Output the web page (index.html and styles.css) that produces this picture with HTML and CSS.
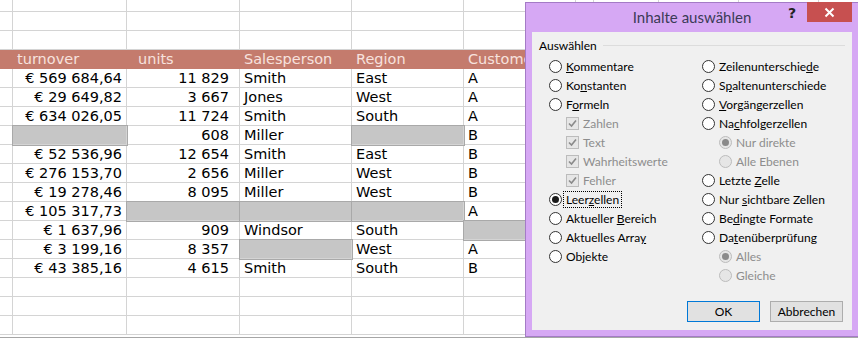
FILE: index.html
```html
<!DOCTYPE html>
<html lang="de">
<head>
    <meta charset="UTF-8">
    <title>Inhalte auswählen</title>
    <link rel="stylesheet" href="styles.css">
</head>
<body>
    <div class="sheet">
        <div class="row top"><div></div><div></div><div></div><div></div><div></div><div></div><div></div><div></div><div></div><div></div></div>
        <div class="row"><div></div><div></div><div></div><div></div><div></div><div></div><div></div><div></div><div></div><div></div></div>
        <div class="row"><div></div><div></div><div></div><div></div><div></div><div></div><div></div><div></div><div></div><div></div></div>
        <div class="row head"><div></div><div>turnover</div><div class="indent">units</div><div>Salesperson</div><div>Region</div><div>Customer</div><div></div><div></div><div></div><div></div></div>

        <div class="row"><div></div><div class="num">€ 569 684,64</div><div class="num units">11 829</div><div>Smith</div><div>East</div><div>A</div><div></div><div></div><div></div><div></div></div>
        <div class="row"><div></div><div class="num">€ 29 649,82</div><div class="num units">3 667</div><div>Jones</div><div>West</div><div>A</div><div></div><div></div><div></div><div></div></div>
        <div class="row"><div></div><div class="num">€ 634 026,05</div><div class="num units">11 724</div><div>Smith</div><div>South</div><div>A</div><div></div><div></div><div></div><div></div></div>
        <div class="row"><div></div><div class="blank"></div><div class="num units">608</div><div>Miller</div><div class="blank"></div><div>B</div><div></div><div></div><div></div><div></div></div>
        <div class="row"><div></div><div class="num">€ 52 536,96</div><div class="num units">12 654</div><div>Smith</div><div>East</div><div>B</div><div></div><div></div><div></div><div></div></div>
        <div class="row"><div></div><div class="num">€ 276 153,70</div><div class="num units">2 656</div><div>Miller</div><div>West</div><div>B</div><div></div><div></div><div></div><div></div></div>
        <div class="row"><div></div><div class="num">€ 19 278,46</div><div class="num units">8 095</div><div>Miller</div><div>West</div><div>B</div><div></div><div></div><div></div><div></div></div>
        <div class="row"><div></div><div class="num">€ 105 317,73</div><div class="blank"></div><div class="blank"></div><div class="blank"></div><div>A</div><div></div><div></div><div></div><div></div></div>
        <div class="row"><div></div><div class="num">€ 1 637,96</div><div class="num units">909</div><div>Windsor</div><div>South</div><div class="blank"></div><div></div><div></div><div></div><div></div></div>
        <div class="row"><div></div><div class="num">€ 3 199,16</div><div class="num units">8 357</div><div class="blank"></div><div>West</div><div>A</div><div></div><div></div><div></div><div></div></div>
        <div class="row"><div></div><div class="num">€ 43 385,16</div><div class="num units">4 615</div><div>Smith</div><div>South</div><div>B</div><div></div><div></div><div></div><div></div></div>

        <div class="row"><div></div><div></div><div></div><div></div><div></div><div></div><div></div><div></div><div></div><div></div></div>
        <div class="row"><div></div><div></div><div></div><div></div><div></div><div></div><div></div><div></div><div></div><div></div></div>
        <div class="row"><div></div><div></div><div></div><div></div><div></div><div></div><div></div><div></div><div></div><div></div></div>
        <div class="sheet-end"></div>
    </div>

    <div class="dialog">
        <div class="titlebar">
            <div></div>
            <div class="title">Inhalte auswählen</div>
            <div class="title-buttons">
                <span class="help">?</span>
                <span class="close">
                    <svg width="11" height="11" viewBox="0 0 11 11"><path d="M1.5 1.5 L9.5 9.5 M9.5 1.5 L1.5 9.5" stroke="#fff" stroke-width="2"/></svg>
                </span>
            </div>
        </div>

        <div class="panel">
            <div class="group-head">
                <span>Auswählen</span>
                <span class="group-line"></span>
            </div>

            <div class="options">
                <div class="col">
                    <div class="opt"><span class="radio"></span><span><u>K</u>ommentare</span></div>
                    <div class="opt"><span class="radio"></span><span>Ko<u>n</u>stanten</span></div>
                    <div class="opt"><span class="radio"></span><span>F<u>o</u>rmeln</span></div>
                    <div class="opt sub off"><span class="check"><svg width="11" height="11" viewBox="0 0 11 11"><path d="M2 5.5 L4.5 8 L9 2.5" fill="none" stroke="#8a8a8a" stroke-width="1.6"/></svg></span><span>Zahlen</span></div>
                    <div class="opt sub off"><span class="check"><svg width="11" height="11" viewBox="0 0 11 11"><path d="M2 5.5 L4.5 8 L9 2.5" fill="none" stroke="#8a8a8a" stroke-width="1.6"/></svg></span><span>Text</span></div>
                    <div class="opt sub off"><span class="check"><svg width="11" height="11" viewBox="0 0 11 11"><path d="M2 5.5 L4.5 8 L9 2.5" fill="none" stroke="#8a8a8a" stroke-width="1.6"/></svg></span><span>Wahrheitswerte</span></div>
                    <div class="opt sub off"><span class="check"><svg width="11" height="11" viewBox="0 0 11 11"><path d="M2 5.5 L4.5 8 L9 2.5" fill="none" stroke="#8a8a8a" stroke-width="1.6"/></svg></span><span>Fehler</span></div>
                    <div class="opt"><span class="radio on"></span><span class="focus">Leer<u>z</u>ellen</span></div>
                    <div class="opt"><span class="radio"></span><span>Aktueller <u>B</u>ereich</span></div>
                    <div class="opt"><span class="radio"></span><span>Aktuelles Arra<u>y</u></span></div>
                    <div class="opt"><span class="radio"></span><span>Ob<u>j</u>ekte</span></div>
                </div>
                <div class="col">
                    <div class="opt"><span class="radio"></span><span>Zeilenunterschie<u>d</u>e</span></div>
                    <div class="opt"><span class="radio"></span><span>S<u>p</u>altenunterschiede</span></div>
                    <div class="opt"><span class="radio"></span><span><u>V</u>orgängerzellen</span></div>
                    <div class="opt"><span class="radio"></span><span>Na<u>c</u>hfolgerzellen</span></div>
                    <div class="opt sub off"><span class="radio on"></span><span>Nur direkte</span></div>
                    <div class="opt sub off"><span class="radio"></span><span>Alle Ebenen</span></div>
                    <div class="opt"><span class="radio"></span><span>Letzte <u>Z</u>elle</span></div>
                    <div class="opt"><span class="radio"></span><span>Nur <u>s</u>ichtbare Zellen</span></div>
                    <div class="opt"><span class="radio"></span><span>Be<u>d</u>ingte Formate</span></div>
                    <div class="opt"><span class="radio"></span><span>Da<u>t</u>enüberprüfung</span></div>
                    <div class="opt sub off"><span class="radio on"></span><span>Alles</span></div>
                    <div class="opt sub off"><span class="radio"></span><span>Gleiche</span></div>
                </div>
            </div>

            <div class="buttons">
                <button class="btn default">OK</button>
                <button class="btn">Abbrechen</button>
            </div>
        </div>
    </div>
</body>
</html>
```

FILE: styles.css
```css
/* Reset */
* {
    margin: 0;
    padding: 0;
    box-sizing: border-box;
}

body {
    width: 858px;
    height: 340px;
    overflow: hidden;
    position: relative;
    background: #fff;
}

/* Spreadsheet */
.sheet {
    font-family: "DejaVu Sans", Verdana, sans-serif;
    font-size: 14.5px;
    color: #000;
}

.row {
    display: grid;
    grid-template-columns: 13px 114px 113px 112px 112px 112px 18px 65px 80px 80px;
    height: 19px;
}

.row.top {
    height: 12px;
}

.row > div {
    border-right: 1px solid #d4d4d4;
    border-bottom: 1px solid #d4d4d4;
    padding: 0 4px;
    line-height: 18px;
    white-space: nowrap;
    overflow: hidden;
}

.row .num {
    text-align: right;
}

.row .units {
    padding-right: 10px;
}

.row .indent {
    padding-left: 11px;
}

.row .blank {
    background: #c6c6c6;
    box-shadow: 0 0 0 1px #a9a9a9;
    position: relative;
    z-index: 1;
}

.head {
    background: #c47b6d;
    color: #f7e2de;
}

.row.head > div {
    border-color: #c47b6d;
}

.sheet-end {
    margin-top: 2px;
    border-top: 1px solid #a6a6a6;
}

/* Dialog */
.dialog {
    position: absolute;
    left: 525px;
    top: 2px;
    width: 334px;
    height: 335px;
    background: #d6a8f4;
    border: 1px solid #a47bc6;
    padding: 0 6px 6px;
    display: flex;
    flex-direction: column;
    font-family: Lato, "Open Sans", sans-serif;
    font-size: 12px;
    color: #000;
    z-index: 5;
}

.titlebar {
    height: 29px;
    display: grid;
    grid-template-columns: 1fr auto 1fr;
}

.title {
    font-size: 15px;
    line-height: 29px;
    color: #3b3b57;
}

.title-buttons {
    display: flex;
    justify-content: flex-end;
    align-items: flex-start;
}

.help {
    font-family: "DejaVu Sans", sans-serif;
    font-weight: bold;
    font-size: 14px;
    line-height: 20px;
    color: #222;
    margin-right: 11px;
}

.close {
    width: 45px;
    height: 20px;
    margin-top: -1px;
    background: #c75050;
    display: flex;
    justify-content: center;
    align-items: center;
}

.panel {
    flex: 1;
    background: #f0f0f0;
    padding: 4px 7px 0;
}

.group-head {
    display: flex;
    align-items: center;
    gap: 6px;
    height: 19px;
}

.group-line {
    flex: 1;
    height: 1px;
    background: #dcdcdc;
}

.options {
    display: grid;
    grid-template-columns: 153px 1fr;
    margin-top: 2px;
    padding-left: 10px;
}

.opt {
    display: flex;
    align-items: center;
    gap: 4px;
    height: 19px;
    white-space: nowrap;
}

.opt.sub {
    padding-left: 17px;
}

.opt.off {
    color: #8d8d8d;
}

.radio {
    width: 13px;
    height: 13px;
    border-radius: 50%;
    border: 1px solid #333;
    background: #fff;
    display: flex;
    justify-content: center;
    align-items: center;
    flex-shrink: 0;
}

.radio.on::after {
    content: "";
    width: 7px;
    height: 7px;
    border-radius: 50%;
    background: #1a1a1a;
}

.off .radio {
    border-color: #bcbcbc;
    background: #e6e6e6;
}

.off .radio.on::after {
    background: #8a8a8a;
}

.check {
    width: 13px;
    height: 13px;
    border: 1px solid #bcbcbc;
    background: #e6e6e6;
    display: flex;
    justify-content: center;
    align-items: center;
    flex-shrink: 0;
}

.focus {
    outline: 1px dotted #000;
    padding: 0 2px;
    margin-left: -2px;
    line-height: 15px;
}

.buttons {
    display: flex;
    justify-content: flex-end;
    gap: 10px;
    margin-top: 16px;
    margin-right: 2px;
}

.btn {
    width: 73px;
    height: 21px;
    border: 1px solid #adadad;
    background: #e1e1e1;
    font-family: Lato, "Open Sans", sans-serif;
    font-size: 12px;
    color: #000;
}

.btn.default {
    border-color: #0078d7;
}
```
